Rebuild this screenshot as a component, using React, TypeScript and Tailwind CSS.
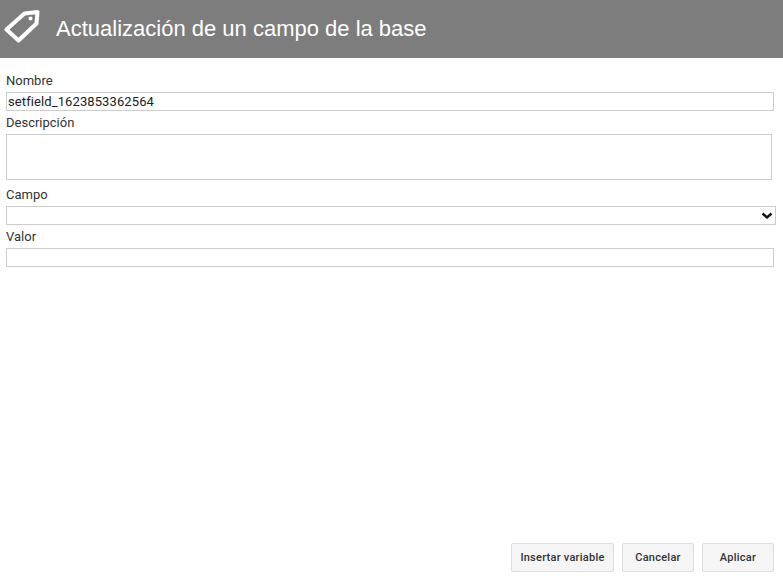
const labelClass = "block h-[21px] text-[13px] leading-[19px] text-[#333]";
const fieldClass = "block h-[19px] border border-[#ccc] bg-white px-[1px] text-[13px] tracking-[0.1px] leading-[17px] text-[#222] outline-none";
const buttonClass =
  "h-[29px] rounded-[2px] border border-[#ddd] bg-[#f5f5f5] pt-[1px] text-[11px] font-medium tracking-[0.25px] text-[#333]";

function TagIcon() {
  return (
    <svg width="38" height="38" viewBox="0 0 38 38" fill="none" className="shrink-0">
      <path
        d="M21.5 3.5 L34.5 2 L33.5 13.5 L15.5 30.5 L3.5 19.5 Z"
        stroke="#fff"
        strokeWidth="4"
        strokeLinejoin="round"
      />
      <circle cx="27.5" cy="8.5" r="2" fill="#fff" />
    </svg>
  );
}

export default function App() {
  return (
    <div className="flex h-[579px] w-[783px] flex-col overflow-hidden bg-white font-['Roboto',sans-serif]">
      <header className="flex h-[58px] shrink-0 items-center gap-[15px] bg-[#7d7d7d] pl-[3px]">
        <TagIcon />
        <h1 className="pb-[2px] font-['Liberation_Sans',sans-serif] text-[22px] text-white">
          Actualización de un campo de la base
        </h1>
      </header>

      <form className="flex flex-1 flex-col px-[6px] pt-[13px]">
        <label className={labelClass}>Nombre</label>
        <input className={`${fieldClass} w-[768px]`} defaultValue="setfield_1623853362564" />
        <label className={`${labelClass} mt-[2px]`}>Descripción</label>
        <textarea className={`${fieldClass} h-[46px] w-[766px] resize-none`} />
        <label className={`${labelClass} mt-[5px]`}>Campo</label>
        <div className="relative h-[19px] w-[770px]">
          <div className={`${fieldClass} w-full`} />
          <svg width="12" height="8" viewBox="0 0 12 8" className="absolute right-[3px] top-[6px]">
            <path d="M1.5 1.5 L6 5.5 L10.5 1.5" fill="none" stroke="#111" strokeWidth="2.4" />
          </svg>
        </div>
        <label className={`${labelClass} mt-[2px]`}>Valor</label>
        <input className={`${fieldClass} w-[768px]`} />

        <div className="mt-auto mb-[7px] flex justify-end gap-[8px] pr-[3px]">
          <button type="button" className={`${buttonClass} w-[103px]`}>Insertar variable</button>
          <button type="button" className={`${buttonClass} w-[72px]`}>Cancelar</button>
          <button type="button" className={`${buttonClass} w-[72px]`}>Aplicar</button>
        </div>
      </form>
    </div>
  );
}
